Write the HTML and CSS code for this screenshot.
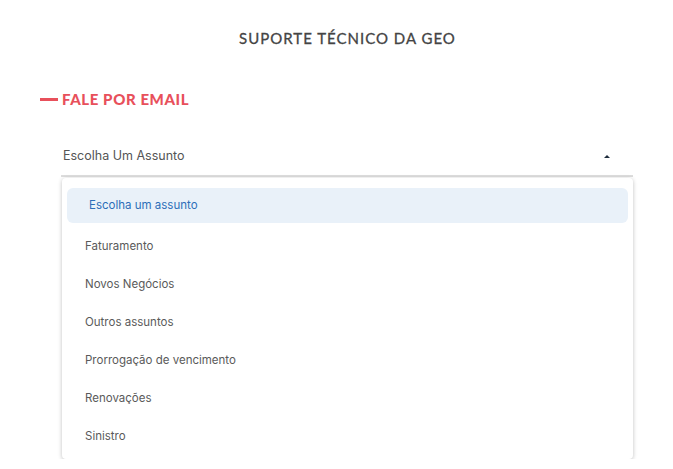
FILE: index.html
```html
<!DOCTYPE html>
<html lang="pt-BR">
<head>
    <meta charset="UTF-8">
    <meta name="viewport" content="width=device-width, initial-scale=1.0">
    <title>Suporte Técnico da GEO</title>
    <link rel="stylesheet" href="styles.css">
</head>
<body>
    <div class="page">
        <h1 class="title">SUPORTE TÉCNICO DA GEO</h1>
        <h2 class="section"><span class="dash"></span>FALE POR EMAIL</h2>

        <div class="select">
            <div class="select-field">
                <span>Escolha Um Assunto</span>
                <span class="arrow"></span>
            </div>
            <ul class="menu">
                <li class="option selected">Escolha um assunto</li>
                <li class="option">Faturamento</li>
                <li class="option">Novos Negócios</li>
                <li class="option">Outros assuntos</li>
                <li class="option">Prorrogação de vencimento</li>
                <li class="option">Renovações</li>
                <li class="option">Sinistro</li>
            </ul>
        </div>
    </div>
</body>
</html>
```

FILE: styles.css
```css
body {
    margin: 0;
    background: #fff;
    font-family: Inter, "Noto Sans", sans-serif;
    color: #555;
}
.page {
    padding: 29px 40px 0 40px;
}
.title {
    margin: 0;
    text-align: center;
    font-family: Lato, sans-serif;
    font-size: 15px;
    font-weight: 400;
    letter-spacing: 1px;
    color: #444;
    line-height: 18px;
    padding-left: 22px;
    -webkit-text-stroke: 0.3px #444;
}
.section {
    display: flex;
    align-items: center;
    margin: 43px 0 0 0;
    font-family: Lato, sans-serif;
    font-size: 15px;
    font-weight: 900;
    letter-spacing: 0.6px;
    color: #e8505b;
    line-height: 18px;
}
.dash {
    width: 18px;
    height: 3px;
    background: #e8505b;
    margin-right: 4px;
}
.select {
    margin: 31px 0 0 21px;
    width: 572px;
}
.select-field {
    display: flex;
    justify-content: space-between;
    align-items: center;
    padding: 8px 0 10px 2px;
    border-bottom: 2px solid #ddd;
    font-size: 12.5px;
    color: #555;
    line-height: 18px;
}
.arrow {
    width: 0;
    height: 0;
    border-left: 3px solid transparent;
    border-right: 3px solid transparent;
    border-bottom: 3px solid #1f2d3d;
    margin-right: 23px;
}
.menu {
    list-style: none;
    margin: 1px 0 0 1px;
    padding: 10px 5px 4px 5px;
    background: #fff;
    border-radius: 4px;
    box-shadow: 0 1px 4px rgba(0, 0, 0, 0.25);
    width: 561px;
}
.option {
    height: 38px;
    line-height: 38px;
    padding-left: 18px;
    font-size: 11.5px;
    color: #5a5a5a;
}
.option.selected {
    height: 35px;
    line-height: 35px;
    margin-bottom: 4px;
    padding-left: 22px;
    background: #e9f1f9;
    border-radius: 6px;
    color: #2c6eb8;
}
```
